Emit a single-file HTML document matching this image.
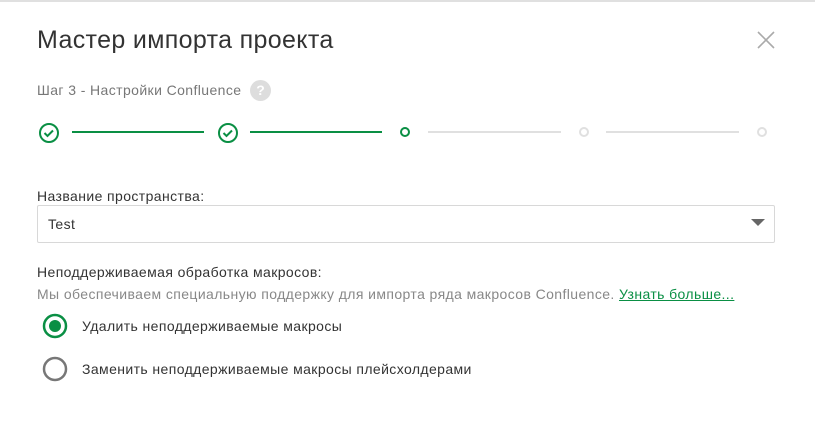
<!DOCTYPE html>
<html><head><meta charset="utf-8"><style>
body{margin:0;width:815px;height:429px;background:#fff;font-family:"Liberation Sans",sans-serif;position:relative;overflow:hidden;color:#333}
.a{position:absolute;white-space:nowrap;letter-spacing:0.4px}
</style></head><body>
<div class="a" style="left:0;top:0;width:815px;height:2px;background:#e0e0e0"></div>
<div class="a" style="left:37px;top:26px;font-size:25px;color:#333;letter-spacing:0.35px">Мастер импорта проекта</div>
<svg class="a" style="left:756px;top:30px" width="20" height="20"><path d="M2 2L18 18M18 2L2 18" stroke="#aaa" stroke-width="1.6"/></svg>
<div class="a" style="left:37px;top:82px;font-size:14px;color:#777">Шаг 3 - Настройки Confluence</div>
<div class="a" style="left:250px;top:80px;width:21px;height:21px;border-radius:50%;background:#ddd;color:#fff;font-size:14px;font-weight:bold;text-align:center;line-height:21px;letter-spacing:0">?</div>
<svg class="a" style="left:0;top:115px" width="815" height="36">
<g fill="none" stroke="#0a8f44" stroke-width="2">
<circle cx="49" cy="18" r="9"/><path d="M44.5 18l3 3 5.5-5.5"/>
<circle cx="228" cy="18" r="9"/><path d="M223.5 18l3 3 5.5-5.5"/>
<circle cx="405" cy="17" r="4"/>
<path d="M72 17H204M250 17H382"/></g>
<g fill="none" stroke="#e0e0e0" stroke-width="2">
<circle cx="584" cy="17" r="4"/><circle cx="762" cy="17" r="4"/>
<path d="M428 17H561M606 17H739"/></g></svg>
<div class="a" style="left:37px;top:188px;font-size:14px">Название пространства:</div>
<div class="a" style="left:37px;top:205px;width:736px;height:36px;border:1px solid #d8d8d8;border-radius:2px"></div>
<div class="a" style="left:48px;top:216px;font-size:14px">Test</div>
<svg class="a" style="left:751px;top:219px" width="14" height="8"><path d="M0 0H14L7 7Z" fill="#666"/></svg>
<div class="a" style="left:37px;top:264px;font-size:14px">Неподдерживаемая обработка макросов:</div>
<div class="a" style="left:37px;top:286px;font-size:14px;color:#888">Мы обеспечиваем специальную поддержку для импорта ряда макросов Confluence. <span style="color:#0a8f44;text-decoration:underline">Узнать больше...</span></div>
<svg class="a" style="left:40px;top:312px" width="30" height="72">
<circle cx="15" cy="14" r="11" fill="none" stroke="#0a8f44" stroke-width="2.5"/><circle cx="15" cy="14" r="6" fill="#0a8f44"/>
<circle cx="15" cy="57" r="11" fill="none" stroke="#777" stroke-width="2.5"/></svg>
<div class="a" style="left:82px;top:318px;font-size:14px">Удалить неподдерживаемые макросы</div>
<div class="a" style="left:82px;top:361px;font-size:14px">Заменить неподдерживаемые макросы плейсхолдерами</div>
</body></html>
